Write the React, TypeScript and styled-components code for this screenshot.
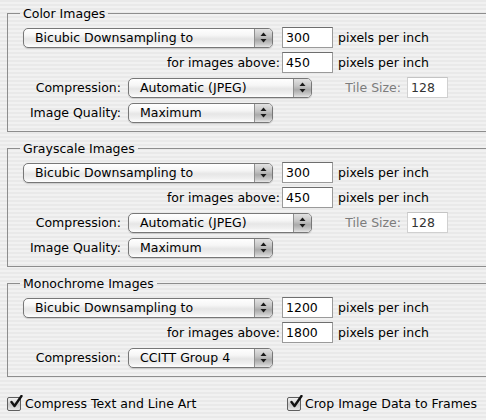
import React from 'react'
import styled, { createGlobalStyle } from 'styled-components'

const GlobalStyle = createGlobalStyle`
  html, body {
    margin: 0;
    padding: 0;
  }
  body {
    width: 486px;
    height: 420px;
    overflow: hidden;
    background: repeating-linear-gradient(to bottom, #e9e9e9 0 2px, #f1f1f1 2px 4px);
    font-family: "DejaVu Sans", "Liberation Sans", sans-serif;
    font-size: 12px;
    color: #000;
  }
`

const Page = styled.div`
  display: flex;
  flex-direction: column;
  padding: 6px 0 0 7px;
`

const Group = styled.fieldset`
  margin: 0 0 9px 0;
  padding: 0;
  min-width: 0;
  border: 1px solid #8d8d8d;
  border-right: none;
`

const Title = styled.legend`
  margin-left: 12px;
  padding: 0 3px;
  line-height: 15px;
  font-size: 12.5px;
`

const Body = styled.div`
  display: flex;
  flex-direction: column;
  gap: 4px;
  padding: 6px 0 8px 15px;
`

const Row = styled.div`
  display: flex;
  align-items: center;
  height: 21px;
`

const Label = styled.span<{ $w: number; $gap: number; $dim?: boolean }>`
  width: ${(p) => p.$w}px;
  margin-right: ${(p) => p.$gap}px;
  text-align: right;
  white-space: nowrap;
  color: ${(p) => (p.$dim ? '#7c7c7c' : '#000')};
  font-size: 12.5px;
`

const Popup = styled.div<{ $w: number }>`
  position: relative;
  display: flex;
  align-items: center;
  box-sizing: border-box;
  width: ${(p) => p.$w}px;
  height: 20px;
  border: 1px solid #777;
  border-radius: 5px;
  background: linear-gradient(to bottom, #ffffff 0%, #f6f6f6 35%, #e6e6e6 55%, #f0f0f0 80%, #ffffff 100%);
  box-shadow: 0 1px 1px rgba(0, 0, 0, 0.15);
  overflow: hidden;
`

const PopupText = styled.span`
  flex: 1;
  padding-left: 11px;
  white-space: nowrap;
  font-size: 12.5px;
`

const PopupArrows = styled.div`
  display: flex;
  align-items: center;
  justify-content: center;
  width: 17px;
  height: 100%;
  border-left: 1px solid #8f8f8f;
  background: linear-gradient(to bottom, #e2e2e2 0%, #c4c4c4 40%, #a9a9a9 60%, #c9c9c9 85%, #e6e6e6 100%);
`

const Field = styled.div<{ $w: number; $dim?: boolean }>`
  box-sizing: border-box;
  width: ${(p) => p.$w}px;
  height: 21px;
  padding: 2px 0 0 3px;
  background: #fff;
  border: 1px solid ${(p) => (p.$dim ? '#d0d0d0' : '#9a9a9a')};
  border-top-color: ${(p) => (p.$dim ? '#c4c4c4' : '#6e6e6e')};
  color: ${(p) => (p.$dim ? '#333' : '#000')};
  font-size: 12.5px;
  line-height: 15px;
`

const Unit = styled.span`
  margin-left: 5px;
  white-space: nowrap;
  font-size: 12.5px;
`

const Checks = styled.div`
  display: grid;
  grid-template-columns: 280px auto;
  margin-top: 10px;
`

const Check = styled.label`
  display: flex;
  align-items: center;
  gap: 4px;
  font-size: 12.5px;
  white-space: nowrap;
`

const Box = styled.span`
  display: flex;
  align-items: center;
  justify-content: center;
  box-sizing: border-box;
  width: 14px;
  height: 14px;
  border: 1px solid #5f5f5f;
  border-radius: 2px;
  background: linear-gradient(to bottom, #f4f4f4, #c9c9c9 55%, #e8e8e8);
`

const Arrows = () => (
  <svg width="7" height="11" viewBox="0 0 7 11">
    <path d="M3.5 0.5 L6.5 4 L0.5 4 Z" fill="#1a1a1a" />
    <path d="M3.5 10.5 L6.5 7 L0.5 7 Z" fill="#1a1a1a" />
  </svg>
)

const Tick = () => (
  <svg width="14" height="14" viewBox="0 0 14 14" style={{ marginTop: -3, marginRight: -3 }}>
    <path d="M2.5 7 L5.5 11 L12.5 1" fill="none" stroke="#111" strokeWidth="2.4" strokeLinecap="round" strokeLinejoin="round" />
  </svg>
)

const Select = ({ w, text }: { w: number; text: string }) => (
  <Popup $w={w}>
    <PopupText>{text}</PopupText>
    <PopupArrows>
      <Arrows />
    </PopupArrows>
  </Popup>
)

interface SectionProps {
  title: string
  res: string
  above: string
  compression: string
  compW: number
  quality?: boolean
}

const Section = ({ title, res, above, compression, compW, quality }: SectionProps) => (
  <Group>
    <Title>{title}</Title>
    <Body>
      <Row>
        <Select w={250} text="Bicubic Downsampling to" />
        <Label $w={0} $gap={9} />
        <Field $w={51}>{res}</Field>
        <Unit>pixels per inch</Unit>
      </Row>
      <Row>
        <Label $w={257} $gap={2}>for images above:</Label>
        <Field $w={51}>{above}</Field>
        <Unit>pixels per inch</Unit>
      </Row>
      <Row>
        <Label $w={98} $gap={7}>Compression:</Label>
        <Select w={compW} text={compression} />
        {quality && (
          <>
            <Label $w={89} $gap={6} $dim>Tile Size:</Label>
            <Field $w={41} $dim>128</Field>
          </>
        )}
      </Row>
      {quality && (
        <Row>
          <Label $w={98} $gap={7}>Image Quality:</Label>
          <Select w={145} text="Maximum" />
        </Row>
      )}
    </Body>
  </Group>
)

export default function App() {
  return (
    <>
      <GlobalStyle />
      <Page>
        <Section title="Color Images" res="300" above="450" compression="Automatic (JPEG)" compW={184} quality />
        <Section title="Grayscale Images" res="300" above="450" compression="Automatic (JPEG)" compW={184} quality />
        <Section title="Monochrome Images" res="1200" above="1800" compression="CCITT Group 4" compW={145} />
        <Checks>
          <Check>
            <Box>
              <Tick />
            </Box>
            Compress Text and Line Art
          </Check>
          <Check>
            <Box>
              <Tick />
            </Box>
            Crop Image Data to Frames
          </Check>
        </Checks>
      </Page>
    </>
  )
}
